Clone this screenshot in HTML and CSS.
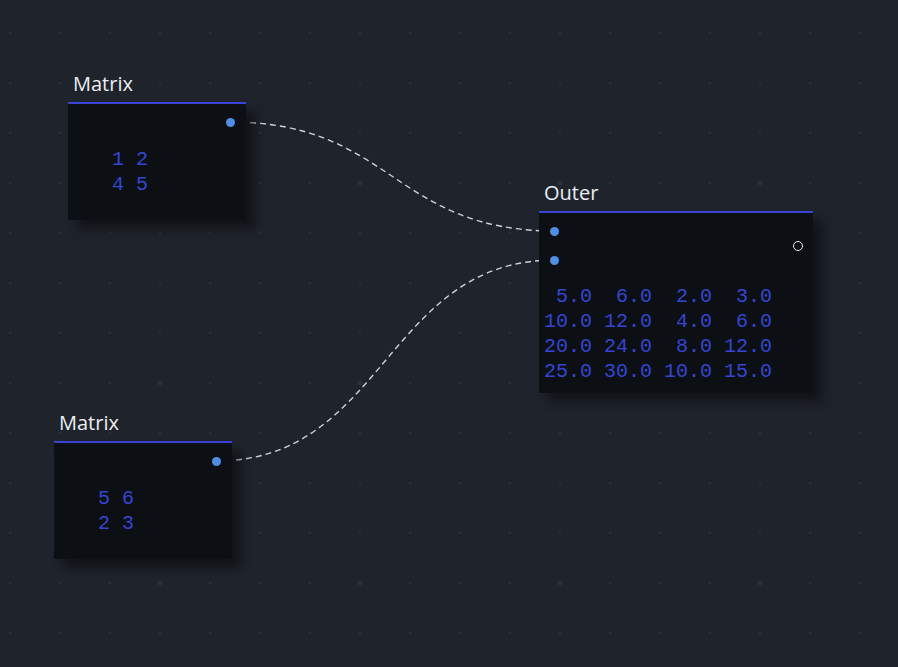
FILE: index.html
```html
<!DOCTYPE html>
<html>
<head>
<meta charset="utf-8">
<link rel="stylesheet" href="styles.css">
</head>
<body>
<div class="canvas">
  <svg class="edges" width="898" height="667" viewBox="0 0 898 667">
    <path d="M230 122 C 392 122, 393 231, 555 231" />
    <path d="M216 461 C 385 461, 386 260, 555 260" />
  </svg>

  <div class="node node-a">
    <div class="node-title">Matrix</div>
    <div class="node-body small">
      <span class="port out"></span>
      <pre class="matrix">1 2
4 5</pre>
    </div>
  </div>

  <div class="node node-b">
    <div class="node-title">Matrix</div>
    <div class="node-body small">
      <span class="port out"></span>
      <pre class="matrix">5 6
2 3</pre>
    </div>
  </div>

  <div class="node node-c">
    <div class="node-title">Outer</div>
    <div class="node-body large">
      <span class="port in in1"></span>
      <span class="port in in2"></span>
      <span class="port hollow"></span>
      <pre class="matrix wide"> 5.0  6.0  2.0  3.0
10.0 12.0  4.0  6.0
20.0 24.0  8.0 12.0
25.0 30.0 10.0 15.0</pre>
    </div>
  </div>
</div>
</body>
</html>
```

FILE: styles.css
```css
html, body {
  margin: 0;
  padding: 0;
  width: 898px;
  height: 667px;
  overflow: hidden;
}

body {
  background-color: #1f232b;
  font-family: "Open Sans", "Noto Sans", sans-serif;
}

.canvas {
  position: relative;
  width: 898px;
  height: 667px;
  background-color: #1f232b;
  background-image:
    radial-gradient(circle at center, #2b303a 0, #2b303a 1.5px, rgba(43,48,58,0.4) 2.5px, transparent 3.5px),
    radial-gradient(circle at center, #2b3039 0, #2b3039 1px, transparent 1.6px);
  background-size: 200px 200px, 50px 50px;
  background-position: 60px 83px, -15px 8px;
}

.edges {
  position: absolute;
  left: 0;
  top: 0;
  z-index: 0;
}

.edges path {
  fill: none;
  stroke: #cfd1d6;
  stroke-width: 1.4;
  stroke-dasharray: 6 4;
}

.node {
  position: absolute;
  z-index: 1;
  display: flex;
  flex-direction: column;
}

.node-a { left: 68px; top: 70px; width: 178px; }
.node-b { left: 54px; top: 409px; width: 178px; }
.node-c { left: 539px; top: 179px; width: 274px; }

.node-title {
  height: 32px;
  padding-left: 5px;
  color: #eceef2;
  font-size: 20px;
  line-height: 28px;
}

.node-body {
  position: relative;
  background: #0c1015;
  border-top: 2px solid #3a43d6;
  box-shadow: 9px 9px 10px rgba(0, 0, 0, 0.45);
}

.node-body.small { height: 116px; }
.node-body.large { height: 180px; }

.port {
  position: absolute;
  width: 9px;
  height: 9px;
  border-radius: 50%;
  background: #4f8ee2;
}

.port.out { right: 11px; top: 14px; }
.port.in { left: 11px; }
.port.in1 { top: 14px; }
.port.in2 { top: 43px; }
.port.hollow {
  right: 10px;
  top: 28px;
  width: 8px;
  height: 8px;
  background: transparent;
  border: 1.5px solid #e8e8e8;
}

.matrix {
  margin: 0;
  font-family: "Liberation Mono", "DejaVu Sans Mono", monospace;
  font-size: 20px;
  line-height: 25px;
  color: #3545d0;
  padding: 43px 0 0 44px;
}

.matrix.wide {
  padding: 71px 0 0 5px;
}
```
